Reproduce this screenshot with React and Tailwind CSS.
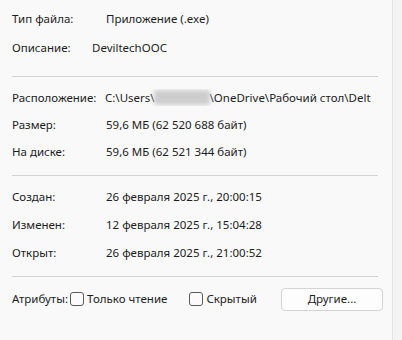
import React from "react";

const font = { fontFamily: '"Segoe UI", "Noto Sans", "Liberation Sans", sans-serif' };

function Row({ label, children, h = "h-[28px]", valueX = "w-[94px]" }) {
  return (
    <div className={`flex items-center ${h} whitespace-nowrap`}>
      <div className={`${valueX} shrink-0`}>{label}</div>
      <div className="overflow-hidden">{children}</div>
    </div>
  );
}

function Sep({ className = "" }) {
  return <div className={`h-px bg-[#d2d2d2] mr-[14px] ${className}`} />;
}

function Check({ label }) {
  return (
    <label className="flex items-center gap-[3px]">
      <span className="w-[14px] h-[14px] rounded-[3px] border border-[#5b5b5b] bg-[#fbfbfb]" />
      <span>{label}</span>
    </label>
  );
}

export default function App() {
  return (
    <div
      className="flex w-[402px] h-[340px] bg-[#f3f3f3] text-[11.5px] text-[#1c1c1c] overflow-hidden"
      style={font}
    >
      <div className="w-[393px] h-full bg-[#f9f9f9] border-r border-[#e3e3e3] pl-[12px] pt-[4px]">
        <Row label="Тип файла:" h="h-[29px]">Приложение (.exe)</Row>
        <Row label="Описание:" h="h-[29px]" valueX="w-[80px]">DeviltechOOC</Row>

        <Sep className="mt-[14px]" />

        <div className="mt-[7px]">
          <Row label="Расположение:" h="h-[27px]" valueX="w-[93px]">
            <div className="flex items-center w-[276px] overflow-hidden">
              <span>C:\Users\</span>
              <span className="inline-block w-[56px] h-[15px] -ml-[1px] bg-[#cdcdcd] blur-[2px] rounded-[2px] shrink-0" />
              <span>\OneDrive\Рабочий стол\Delt</span>
            </div>
          </Row>
          <Row label="Размер:" h="h-[27px]">59,6 МБ (62 520 688 байт)</Row>
          <Row label="На диске:" h="h-[27px]">59,6 МБ (62 521 344 байт)</Row>
        </div>

        <Sep className="mt-[10px]" />

        <div className="mt-[7px]">
          <Row label="Создан:">26 февраля 2025 г., 20:00:15</Row>
          <Row label="Изменен:">12 февраля 2025 г., 15:04:28</Row>
          <Row label="Открыт:">26 февраля 2025 г., 21:00:52</Row>
        </div>

        <Sep className="mt-[9px]" />

        <div className="mt-[11px] flex items-center h-[22px] whitespace-nowrap pr-[9px]">
          <span className="mr-[2px]">Атрибуты:</span>
          <Check label="Только чтение" />
          <div className="ml-[22px]">
            <Check label="Скрытый" />
          </div>
          <button className="ml-auto w-[102px] h-[23px] rounded-[4px] border border-[#d3d3d3] bg-[#fdfdfd] text-[11.5px] text-[#1c1c1c]">
            Другие...
          </button>
        </div>
      </div>
    </div>
  );
}
